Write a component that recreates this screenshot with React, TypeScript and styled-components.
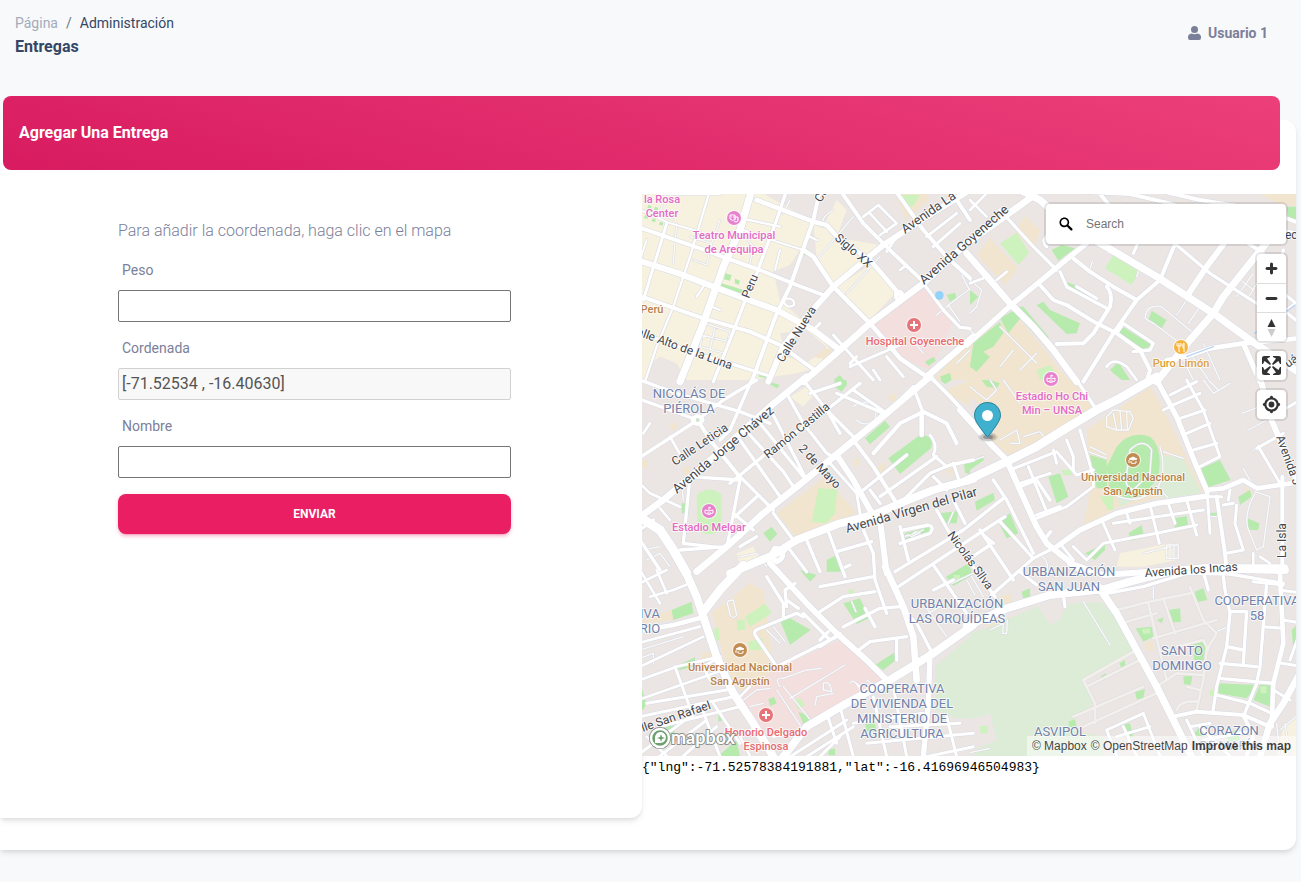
import React, { useState } from "react";
import styled, { createGlobalStyle } from "styled-components";

const GlobalStyle = createGlobalStyle`
  *, *::before, *::after { box-sizing: border-box; }
  body {
    margin: 0;
    background: #f8f9fa;
    color: #344767;
    font-family: Roboto, "Liberation Sans", sans-serif;
    font-size: 14px;
    line-height: 20px;
    overflow-x: hidden;
  }
`;

/* ---------- page chrome ---------- */

const TopBar = styled.header`
  display: flex;
  justify-content: space-between;
  align-items: flex-start;
  height: 96px;
  padding: 13px 33px 0 15px;
`;

const Breadcrumb = styled.ol`
  display: flex;
  gap: 8px;
  margin: 0;
  padding: 0;
  list-style: none;
`;

const CrumbLink = styled.a`
  color: #a3abbb;
  text-decoration: none;
`;

const Slash = styled.li`
  color: #6c757d;
`;

const PageTitle = styled.h1`
  margin: 0;
  font-size: 16px;
  line-height: 28px;
  font-weight: 700;
`;

const UserLink = styled.a`
  display: flex;
  align-items: center;
  gap: 7px;
  margin-top: 10px;
  color: #7b809a;
  font-weight: 700;
  text-decoration: none;
`;

const Panel = styled.main`
  margin: 24px 5px 32px 0;
  padding-bottom: 32px;
  background: #fff;
  border-radius: 0 12px 12px 0;
  box-shadow: 0 4px 6px -1px rgba(0, 0, 0, 0.1), 0 2px 4px -1px rgba(0, 0, 0, 0.06);
`;

const Banner = styled.div`
  position: relative;
  top: -24px;
  display: flex;
  align-items: center;
  height: 74px;
  margin: 0 16px 0 3px;
  padding: 0 16px;
  border-radius: 8px;
  background: linear-gradient(195deg, #ec407a, #d81b60);
`;

const BannerTitle = styled.h2`
  margin: 0;
  color: #fff;
  font-size: 16px;
  line-height: 26px;
  font-weight: 700;
`;

const Columns = styled.div`
  display: grid;
  grid-template-columns: minmax(0, 642fr) minmax(0, 654fr);
  align-items: start;
`;

/* ---------- form ---------- */

const FormCard = styled.section`
  min-height: 624px;
  padding: 24px 131px 24px 118px;
  border-radius: 0 0 12px 0;
  background: #fff;
  box-shadow: 0 4px 6px -1px rgba(0, 0, 0, 0.1), 0 2px 4px -1px rgba(0, 0, 0, 0.06);
`;

const Hint = styled.p`
  margin: 0 0 16px;
  color: #7b809a;
  font-size: 16px;
  line-height: 26px;
  font-weight: 300;
`;

const Field = styled.div`
  display: flex;
  flex-direction: column;
  gap: 10px;
  margin-bottom: 16px;
`;

const Label = styled.label`
  padding-left: 4px;
  color: #7b809a;
`;

const TextInput = styled.input`
  width: 100%;
  height: 32px;
  padding: 0 3px 2px;
  border: 1px solid #767676;
  border-radius: 2px;
  background: #fff;
  color: #212529;
  font-family: inherit;
  font-size: 16px;
  &:disabled {
    border-color: #d1d1d1;
    background: #f8f8f8;
    color: #545454;
  }
`;

const SubmitButton = styled.button`
  width: 100%;
  height: 40px;
  border: 0;
  border-radius: 8px;
  background: #e91e63;
  color: #fff;
  font-family: inherit;
  font-size: 12px;
  font-weight: 700;
  text-transform: uppercase;
  box-shadow: 0 3px 3px 0 rgba(233, 30, 99, 0.15), 0 3px 1px -2px rgba(233, 30, 99, 0.2),
    0 1px 5px 0 rgba(233, 30, 99, 0.15);
`;

/* ---------- map ---------- */

const MapFrame = styled.div`
  position: relative;
  height: 562px;
  overflow: hidden;
  background: #ebe6e4;
`;

const MapSvg = styled.svg`
  display: block;
  width: 100%;
  height: 100%;
  text {
    font-family: Roboto, "Liberation Sans", sans-serif;
    paint-order: stroke;
    stroke: rgba(255, 255, 255, 0.7);
    stroke-width: 2px;
    stroke-linejoin: round;
  }
`;

const Controls = styled.div`
  position: absolute;
  top: 10px;
  right: 10px;
  display: flex;
  flex-direction: column;
  align-items: flex-end;
  gap: 10px;
`;

const SearchBox = styled.label`
  display: flex;
  align-items: center;
  gap: 11px;
  width: 240px;
  height: 40px;
  padding: 0 11px;
  border-radius: 4px;
  background: #fff;
  box-shadow: 0 0 0 2px rgba(0, 0, 0, 0.1);
`;

const SearchInput = styled.input`
  flex: 1;
  min-width: 0;
  padding: 0;
  border: 0;
  outline: 0;
  background: transparent;
  color: #404040;
  font-family: "Liberation Sans", Arial, sans-serif;
  font-size: 12px;
  &::placeholder { color: #757575; opacity: 1; }
`;

const ControlGroup = styled.div`
  width: 29px;
  border-radius: 4px;
  background: #fff;
  box-shadow: 0 0 0 2px rgba(0, 0, 0, 0.1);
`;

const ControlButton = styled.button`
  display: block;
  width: 29px;
  height: 29px;
  padding: 0;
  border: 0;
  background: transparent;
  overflow: hidden;
  & + & {
    border-top: 1px solid #ddd;
  }
  svg { display: block; }
`;

const Attribution = styled.div`
  position: absolute;
  right: 0;
  bottom: 0;
  display: flex;
  gap: 4px;
  padding: 0 5px;
  background: rgba(255, 255, 255, 0.5);
  font-family: "Liberation Sans", Arial, sans-serif;
  font-size: 12px;
  line-height: 20px;
`;

const AttributionLink = styled.a<{ $strong?: boolean }>`
  color: rgba(0, 0, 0, 0.75);
  font-weight: ${(p) => (p.$strong ? 700 : 400)};
  text-decoration: none;
`;

const Readout = styled.pre`
  margin: 0;
  color: #000;
  font-family: "Liberation Mono", monospace;
  font-size: 13px;
  line-height: 24px;
`;

/* Geometry is stored per map tile, at three units to the pixel. */

type Street = [number, string];
interface Tile {
  x: number;
  y: number;
  cream?: string;
  land?: string;
  sand?: string;
  pink?: string;
  park?: string;
  lime?: string;
  green: string;
  lanes?: string;
  streets: Street[];
}

const tiles: Tile[] = [
  {
    x: 0,
    y: 0,
    cream:
      "M0 0H350L520 95L480 180L450 225L400 245L420 330L520 420L580 490L540 530L470 550L330 570H0Z M520 100L600 145L720 165L640 240L580 285L530 200Z M590 290L690 225L770 305L690 390L640 350Z M545 120L590 30L620 60L590 140Z",
    land: "M30 520L60 500L110 520L140 570H20Z M400 245L470 220L560 265L540 310L440 280Z M420 430L500 420L560 470L500 520L440 500Z",
    sand: "M510 460L580 480L560 510L520 500Z M765 12H865V30L800 90Z M880 570L940 500L990 460V570Z",
    pink: "M845 285L870 295L940 395L870 540L790 505L700 400Z",
    lime: "M780 15H840L820 48L800 52Z",
    green:
      "M245 280L310 300L300 315L240 295Z M255 250L275 255L270 272L252 268Z M285 266L300 272L296 284L284 280Z M490 168L525 195L480 196Z M920 315L945 308L950 325L930 335Z M855 515L880 500L888 512L865 528Z M580 570L600 555L610 570Z M360 545L385 555L380 565L355 560Z M900 560L930 548L935 570H905Z M25 45l10 4l-3 8l-10-3Z M45 50l10 4l-3 8l-10-3Z M65 60l10 4l-3 8l-10-3Z M15 75l10 4l-3 8l-10-3Z M38 85l10 4l-3 8l-10-3Z M60 95l10 4l-3 8l-10-3Z",
    lanes:
      "M300 120L340 170L330 220 M160 210L200 225L215 160 M240 90L215 160L150 140 M110 100L100 220 M580 60Q540 80 550 110 M640 80L530 210 M720 200L620 310 M195 400L270 425L255 490L180 470Z M225 410L210 480 M185 435L265 455 M75 12L60 70L100 90 M450 30L430 70 M890 375Q930 340 985 300 M960 240Q975 280 990 300 M925 345L960 395 M810 440L850 490 M950 520L990 480",
    streets: [
      [22, "M335 0L300 120L250 230L190 400L120 575"],
      [18, "M0 213L110 248L220 290L340 335L410 360L520 420L600 480"],
      [14, "M350 30L520 95L560 105L600 150L690 210L780 315"],
      [12, "M0 113L180 175L260 205L360 240L470 285L550 315"],
      [12, "M0 318L90 350L190 385L330 425L420 465L530 545"],
      [10, "M0 425L60 450L170 490L270 520L380 555"],
      [10, "M440 0L410 90L350 250L320 320L270 450L220 575"],
      [12, "M540 0L520 90L450 290L410 370L370 480L335 575"],
      [7, "M210 0L180 100L150 200L100 350L50 470L15 575"],
      [9, "M80 100L50 200L10 330"],
      [6, "M0 60L90 100L180 125 M310 120L410 155L490 180 M20 150L0 210 M420 180L405 240"],
      [7, "M240 12L60 12 M280 80L420 110 M190 290L170 320 M215 350L240 360 M500 135L530 150"],
      [18, "M990 0L860 80L730 165L580 290L500 380L430 470L385 575"],
      [20, "M990 150L850 280L690 400L600 480L490 575"],
      [14, "M490 180L520 200L580 290L690 400L780 505L860 560"],
      [12, "M600 0L670 100L760 190L850 275"],
      [12, "M765 0L850 120L920 200L990 265"],
      [12, "M930 0L990 90"],
      [10, "M850 280L910 360L960 412L990 415"],
      [20, "M1000 440L860 560"],
      [8, "M670 80L715 45L770 100L720 135 M690 70L740 125 M740 185L770 140 M780 240L800 225"],
      [9, "M580 435L620 480L700 570 M630 530L790 460 M740 500L790 560 M700 540L720 570 M650 500L630 520"],
      [9, "M860 140L950 70 M880 170L960 100 M520 420L540 400"],
      [7, "M438 345Q425 335 440 325Q465 325 462 345Q445 355 438 345"],
      [12, "M768 310Q765 330 780 328Q795 315 780 305Z"],
    ],
  },
  {
    x: 990,
    y: 0,
    sand: "M60 145L145 235L105 285L20 195Z M165 78L210 120L190 180L135 125Z M0 440L90 400L150 390L240 500L300 575H0Z M870 12H985V50L920 40Z",
    lime: "M140 128L178 188L145 225L90 160Z M430 195L508 245L485 285L405 235Z M200 540L240 525L270 570H210Z",
    green:
      "M245 180L275 165L315 175L265 212Z M290 275L350 300L375 325L300 300Z M200 345L220 335L240 360L330 400L320 430L290 432Z M450 405L545 465L525 480L445 430Z M545 362L590 390L575 415L535 390Z M135 350L160 350L235 440L240 485L165 400Z M90 385L135 360L155 380L115 430Z M10 460L90 395L100 430L70 470L40 485L60 500L20 545L0 530Z M0 300L25 320L0 345Z M420 540L445 515L480 570H455L430 550Z M950 50H985V95L955 80Z",
    lanes:
      "M355 250L368 212 M415 190Q405 175 425 165 M0 270L35 300L20 350L0 370 M550 400L525 385Q530 340 575 350L670 430 M550 400L630 460 M90 410L200 520 M130 480L90 530 M150 540L200 490 M620 375L650 330 M655 400L690 350 M700 460L750 570 M660 490L720 575 M640 510L670 570 M0 420L20 440 M500 260L510 230 M850 250L800 320 M870 265L830 330 M870 300L920 350 M800 260L850 300",
    streets: [
      [20, "M-10 160L60 110L110 75L180 25L200 0"],
      [22, "M150 0L210 30L300 110L400 165L560 260L730 370L840 450L990 550"],
      [20, "M-10 190L60 270L120 340L190 410L250 480L320 575"],
      [16, "M-10 465L130 340L300 200L400 120L470 50"],
      [22, "M920 120L840 220L760 320L730 370L660 450L560 575"],
      [18, "M770 150L710 230L650 320"],
      [12, "M620 150L570 270L500 330L430 430L340 575"],
      [10, "M90 60L190 170L260 240 M230 170Q210 150 240 130"],
      [12, "M210 285L250 330L290 345L380 400L440 430L510 480L540 540L530 575"],
      [10, "M270 245L290 290L410 355 M320 290L380 325"],
      [12, "M310 205L360 245L430 290L500 330"],
      [12, "M410 290Q430 310 420 350L370 430L340 460L260 462"],
      [10, "M490 190L530 100 M620 165L720 250L860 340"],
      [10, "M440 430L460 400L550 460L540 480L490 485"],
      [14, "M990 445L820 460L720 475L650 500L590 510"],
      [16, "M820 460L870 575"],
      [12, "M230 0L480 12L600 40L730 90L880 190 M380 0L430 60 M560 0L690 30L880 60L990 100"],
      [8, "M0 30L50 80 M80 270L110 245 M0 280L40 265 M60 0L0 60 M410 530Q430 500 470 530L500 570"],
      [10, "M940 180L900 330L990 400 M880 260L990 350 M990 130L870 110 M870 420L990 330"],
    ],
  },
  {
    x: 0,
    y: 570,
    cream: "M450 50L500 20L525 40L490 80Z M290 520L340 500L360 540L300 550Z",
    sand: "M555 290L650 400L470 475L410 400Z M90 130H110V150H92Z M130 260H148V285H130Z M6 240H22V262H6Z M750 40L770 45L765 65L745 60Z M640 240L660 235L655 260L645 262Z M710 262L740 245L735 280L715 290Z M920 30L990 0V80L940 50Z M915 270L940 265L935 290Z",
    lime: "M170 345Q208 312 245 345V450Q208 475 172 450Z M535 325L592 328L585 400L560 430L515 425Z",
    green:
      "M675 175L735 122L750 140L690 193Z M745 235L840 165Q885 165 873 205L780 282Z M585 0H618L622 12L605 35L580 18Z M370 460L395 440L412 462L390 485Z M560 540L590 525L605 575H560Z M900 400L955 393L950 430L920 430Z M795 460L870 440L865 458L790 482Z M972 250H990V282L975 278Z M125 370H145V400H125Z M5 440L20 435L10 455Z M370 0L420 15L410 25Z M900 0L935 0L915 12Z M430 500L460 480L455 495Z",
    lanes:
      "M640 80Q660 60 690 70Q720 90 700 125Q670 140 650 120 M800 470L850 450 M820 460Q830 450 840 462 M940 395L925 430 M150 290Q120 310 130 360 M20 540L60 520L90 560 M10 510L60 500 M300 530L350 520L380 560",
    streets: [
      [20, "M-10 418L70 360L240 215L390 80L500 -10"],
      [20, "M870 -10L740 100L600 215L490 305L370 400L260 500L170 575"],
      [24, "M270 580L400 525L470 480L600 430L700 405L780 370L880 330L1000 297"],
      [28, "M0 412L60 450L100 510L140 580"],
      [10, "M0 232L173 120L250 60L350 0 M0 58L173 120 M0 0L110 40L300 95L390 130"],
      [12, "M173 120L210 180L300 292"],
      [10, "M335 0L270 150L240 180"],
      [8, "M90 170L130 240 M0 310L30 340L120 380 M60 385L90 420 M30 130L10 160"],
      [10, "M325 160L430 275L460 320 M400 105L500 300 M300 180L420 350 M360 130L490 290"],
      [10, "M270 310L380 220L560 90L660 10"],
      [10, "M440 40L490 130L560 220L600 240"],
      [10, "M490 0L560 90L600 160 M560 90L650 180"],
      [18, "M590 225L640 300L690 390L720 420L740 580"],
      [9, "M570 250L650 340L660 400"],
      [12, "M640 180L700 260L770 370"],
      [10, "M670 330L800 225 M720 350L890 230 M690 330L720 370"],
      [12, "M700 220L780 130L850 95L920 130L950 190"],
      [14, "M845 100V165"],
      [9, "M870 165Q895 195 880 225L920 260"],
      [10, "M150 290L300 300L260 505L130 490Z"],
      [10, "M300 290L400 390 M280 400L340 450 M285 410L350 350 M400 400L460 480L430 520 M300 500L350 470"],
      [10, "M640 30L740 100 M590 40L730 100 M600 10L510 40 M820 20L850 100 M780 60L820 20"],
      [12, "M870 -10L930 50L1000 125"],
      [10, "M780 370L870 280L930 255L1000 240 M940 250L960 310 M880 290L920 330"],
      [10, "M500 480L540 575 M450 510L500 575"],
      [10, "M0 480L60 570 M40 420L0 450 M120 510L260 500"],
      [16, "M405 505Q385 530 410 545Q440 530 420 508Z M160 120Q173 100 186 120Q173 140 160 120Z"],
    ],
  },
  {
    x: 990,
    y: 570,
    cream: "M450 520L600 490L620 540L520 560L440 560Z",
    land: "M-20 90L30 110L60 150L20 140Z",
    sand: "M60 0H310L375 90L220 190L120 230L60 180L90 120L0 50V0Z M350 150L540 20L580 90L700 335L560 355L440 385L340 440L360 330Z M820 320L850 335L840 360Z",
    park: "M570 225L640 235L695 340L590 355L540 340L450 380L440 350L560 300Z",
    lime: "M390 350L430 345L430 390L415 390Z M275 270L305 268V285L280 286Z",
    green:
      "M440 200Q480 150 540 170Q580 200 565 290L520 350Q470 370 420 340L410 260Z M360 225L410 240L412 325L380 325Z M695 265L750 240L782 300L705 325Z M235 290L270 280L295 350L260 370Z M85 425L120 400L145 460L110 475Z M15 365L70 338L75 360L20 392Z M475 460L515 435L522 470L485 482Z M612 415L650 408L655 440L615 445Z M345 520L405 490L405 510L375 540Z M720 398H748V412H720Z M805 350L840 330L845 350L810 375Z M832 415L868 430L865 450L835 450Z M0 250L35 225L42 240L0 270Z M35 0H60L90 10L80 25L50 20Z",
    lanes:
      "M480 210Q520 170 545 210L540 280L490 330Q460 320 470 280Z M410 110L430 90L480 95L490 115L475 150L440 150L410 140Z M430 100L440 150 M450 95L455 150 M470 95L472 150 M360 200L410 225 M355 215L410 235 M580 215L640 235 M570 200Q590 270 565 320L595 355 M410 330Q480 380 540 340 M90 180L140 150L150 190L120 190 M160 170L210 155L230 180L200 190 M0 20L50 60L80 30L60 0 M100 0L150 70 M590 495H625V535H590Z M600 495V535 M612 495V535 M520 520L600 500 M700 0L730 40L780 10 M715 0L745 30 M0 245L40 230 M720 410H750 M855 340Q825 390 832 440L860 510L880 500L900 350L855 335 M820 265L850 320 M815 100L870 80 M835 150L890 120 M850 210L900 180",
    streets: [
      [26, "M-10 302L110 245L200 200L280 150L380 90L440 60L560 -10"],
      [18, "M-30 90L60 190L110 240L150 330L200 440L230 490L330 570"],
      [16, "M560 0L620 110L680 260L712 335"],
      [18, "M870 -10L900 110L930 180L1000 350"],
      [10, "M320 0L380 90"],
      [14, "M710 330L760 325L820 300L860 325L1000 305"],
      [16, "M712 348L560 370L440 400L330 450L260 500"],
      [9, "M310 500L350 540L400 490L560 460L680 435 M270 490L310 540 M430 430L560 410L700 390"],
      [9, "M400 430L435 510 M470 400L480 430 M540 375L568 490 M595 370L615 430 M650 360L680 465 M712 345L720 460"],
      [12, "M740 350L765 520L770 575"],
      [9, "M710 350L755 350 M790 370L760 375 M800 375L795 430L820 510L770 520 M780 330L775 360"],
      [12, "M937 290V575"],
      [9, "M865 200L930 310 M860 205L940 160 M990 60L940 90"],
      [9, "M650 0L700 90L750 230L690 260 M600 45L680 5 M610 75L690 40 M630 115L705 90 M650 160L720 130 M670 210L740 190 M580 90L610 75"],
      [9, "M120 270L260 215L320 285L370 270 M150 310L240 280 M200 415L290 380L370 320V290 M175 260L230 395 M330 150L370 290 M290 180L310 230V270 M250 210L260 250"],
      [18, "M300 550L400 585L540 575L700 562L945 562"],
      [8, "M850 520V560 M870 530L900 550"],
    ],
  },
  {
    x: 0,
    y: 1140,
    sand: "M215 130L330 40L370 60L400 280L390 350L310 370L270 330Z M6 150L95 120L100 150L10 160Z M180 250L215 245V280L190 275Z",
    pink: "M600 210L735 340L520 470L480 480L390 500L330 450L300 380L400 300Z",
    park: "M1000 190L885 290L885 420L950 445H1000Z",
    lime: "M315 140L375 100L395 130L330 170Z M290 150H315V180H292Z M220 180L235 170L240 210L225 212Z M325 215L370 205L365 240H328Z M460 390L480 385L495 405L475 420Z M625 60L640 58V75L628 78Z",
    green:
      "M420 150L450 145L512 180L450 225Z M610 100L660 85L687 145L650 162Z M705 285L762 248L768 270L730 300Z M95 120L155 95L160 130L100 150Z M105 290L165 262L167 288L120 300Z M0 340L20 400L10 420L0 415Z M235 420L250 450L235 455Z M480 0L530 15L510 35Z M235 558L290 510L300 558Z M475 425L510 440L518 465L495 475Z M385 388L402 380L410 400L390 408Z M675 460H705L710 485H680Z M565 540L585 535V556H565Z M30 480L100 465L110 520L60 510Z",
    lanes:
      "M265 110Q255 90 280 90L290 135Q280 150 270 135Z M310 390L350 360L390 355 M330 410L370 400 M420 350Q400 320 430 325L500 300L545 295 M430 350L520 460L500 470 M410 360L490 480 M550 340Q570 330 575 365L550 360Z M450 385L615 285 M525 405L530 380L580 370 M630 340Q640 320 660 360L680 370 M380 180L420 220 M400 170L435 215 M0 240L130 200 M0 265L40 250V280 M680 330L720 360 M650 340L690 380",
    streets: [
      [24, "M130 -10L170 80L200 170L230 260L280 370L340 460L400 560"],
      [26, "M310 -15L240 60L190 125"],
      [14, "M195 140L100 165L0 182"],
      [18, "M390 -20L500 100L590 190L690 280L740 330"],
      [20, "M735 -10L790 110L820 200L830 330"],
      [24, "M1000 165L880 250L750 330L620 400L500 470L430 560"],
      [16, "M870 250L865 400L850 560"],
      [8, "M0 218L180 170 M0 290L190 200 M0 330L110 290L240 260 M0 388L250 300 M0 0L60 100 M30 80L100 60L150 40 M0 40L80 0 M80 70L50 0"],
      [9, "M105 290L160 440 M20 400L260 360 M0 440L280 380 M60 470L300 410 M180 400L240 560 M220 400L300 520 M240 260L190 290L210 330 M0 550L150 440 M60 558L200 450 M130 558L230 470"],
      [10, "M410 290L345 195Q340 180 360 175L470 130L490 140 M410 290L600 195 M490 130L570 210 M440 110L435 60L465 40 M430 140V100L380 20 M475 115L440 90"],
      [9, "M600 410L640 560 M700 380L740 560 M640 460L850 430 M680 520L1000 490 M760 350L800 560 M450 560L560 490L620 450 M500 560L640 470 M540 560L600 500 M560 430L590 520 M920 440L950 560 M860 560L1000 530 M750 470L960 460"],
      [8, "M300 380L330 350 M20 500L80 558 M350 470L300 500L330 558 M400 500L500 480"],
    ],
  },
  {
    x: 990,
    y: 1140,
    cream: "M940 470L1000 430V558H920Z",
    park: "M0 190L60 170L200 110L390 95L440 140L480 180L500 240L340 330L370 400L310 450L300 480L400 500V558H0Z",
    land: "M0 450L60 430L80 510L0 545Z M205 110L290 100L270 150L240 165Z M0 500L30 520L10 558H0Z",
    sand: "M50 165L160 130L175 180L70 220Z M90 80L120 70L130 110L100 115Z M525 215H550V240L530 242Z",
    lime: "M30 468H52V490H32Z M718 360H735V378H720Z M515 178L540 175L542 190L520 192Z M870 350L890 348V370H872Z",
    green:
      "M675 65L700 55L712 90L680 97Z M595 120L630 115L633 155L598 158Z M497 175L545 170L550 200L520 215Z M745 340L860 345L830 385L745 370Z M870 345L905 345L900 410L850 390Z M155 65L180 55V80L160 85Z M448 280L465 270V290L455 295Z M392 318L408 310V328L398 330Z M495 365L525 358L520 385L500 388Z M295 455L315 448L320 470L300 472Z M455 465L480 460L490 500L465 505Z M640 320L668 315L662 345L642 342Z M670 215H705V270H672Z M685 475L720 480L700 500L670 495Z M560 150L582 142L575 160Z M965 180L985 160V220L970 240Z M760 490L800 480L810 510L780 515Z M840 0L880 2L760 8Z",
    lanes:
      "M340 95L420 225 M60 180L100 160L98 190H110L112 150 M0 548L60 535 M740 185L775 170 M550 50V85 M920 460L930 558 M945 460L960 558 M990 430L930 480",
    streets: [
      [24, "M-10 168L110 115L240 75L400 58L480 35L600 5L720 -5L945 0"],
      [10, "M280 75L285 110 M410 70L520 50L650 10L780 12L940 40"],
      [22, "M385 50L440 130L500 240L560 350L600 430L665 560"],
      [10, "M700 5L715 60 M760 20L765 60L780 130L770 230L740 350L728 430"],
      [14, "M930 10L940 220L910 340L905 470"],
      [10, "M780 125H830L820 280 M890 40L870 290L860 340L820 440 M770 230L820 240 M750 280L860 290 M750 325L910 340 M740 375L840 400L905 430"],
      [12, "M610 440L680 425L820 435L900 470 M820 435L850 500L830 558"],
      [9, "M880 170L940 175 M930 60L1000 70 M935 280L1000 290 M940 150L1000 160 M910 360L960 390 M850 35L940 45"],
      [20, "M1000 290L940 400L900 460L870 560"],
      [9, "M1000 160L960 270 M410 480L520 430L570 558 M440 558L410 480 M460 470L500 558 M440 500L540 470 M650 450L700 558 M690 470L780 558 M660 470L720 460 M700 510L860 480"],
    ],
  },
  {
    x: 540,
    y: 870,
    lime: "M400 285H420V300H402Z M85 335L100 330L102 350L90 352Z",
    green: "M378 290L445 250L458 285L400 318Z",
    lanes: "M455 290L490 350 M440 300L465 345 M310 370L380 470 M325 400L360 380 M95 365L108 395 M395 310L480 270 M665 230Q690 240 680 290 M255 170Q265 160 275 170L300 158",
    streets: [
      [10, "M25 155L75 290 M50 215L155 185 M130 150L160 220L165 300L200 400"],
      [10, "M0 320L160 290 M0 395L70 350L165 335 M70 440L180 385L240 380 M135 385L165 440"],
      [10, "M110 515L150 485L260 470 M230 480V540 M75 262L90 255"],
      [10, "M240 140L265 240 M240 190L330 160Q345 140 325 135L250 150"],
      [10, "M225 275L430 150L550 55 M235 320L470 165L555 110"],
      [10, "M350 90L400 180L525 350 M400 60L435 130"],
      [10, "M340 255L440 400 M340 330L400 300"],
      [10, "M480 150L580 300 M540 125L640 235 M450 235L510 195 M490 165L520 190"],
      [10, "M520 0L560 60L640 220"],
      [10, "M515 345L640 235L720 195 M600 275L650 315"],
      [10, "M650 105L720 80 M600 20L650 0L690 60 M680 170L692 155"],
      [10, "M240 380L290 430L340 525"],
      [10, "M0 480L25 455 M0 500L60 460"],
    ],
  },
];

const alleys =
  "M440 120L540 95L660 70 M470 155L560 130 M535 100L590 330 M580 85L615 190 M660 50L700 150L740 190 M550 205L740 150 M560 350L620 310L700 315 M740 190L710 240L700 330L680 420 M340 330L500 240 M350 350L510 270 M340 330L375 400V460 M310 440L520 350 M340 470L560 370 M620 420Q630 390 680 395 M650 350L690 360 M620 230L700 210L715 240";

const palette = {
  pink: "#e56ac5",
  red: "#ea6a70",
  brown: "#b98149",
  amber: "#dda23a",
  area: "#7182ab",
  street: "#45464b",
};
type Tone = keyof typeof palette;

const placeLabels: { x: number; y: number; tone: Tone; size?: number; lines: string[] }[] = [
  { x: 662, y: 203, tone: "pink", lines: ["la Rosa", "Center"] },
  { x: 734, y: 239, tone: "pink", lines: ["Teatro Municipal", "de Arequipa"] },
  { x: 652, y: 313, tone: "brown", lines: ["Perú"] },
  { x: 915, y: 345, tone: "red", lines: ["Hospital Goyeneche"] },
  { x: 1181, y: 367, tone: "amber", lines: ["Puro Limón"] },
  { x: 1052, y: 400, tone: "pink", lines: ["Estadio Ho Chi", "Min – UNSA"] },
  { x: 709, y: 531, tone: "pink", lines: ["Estadio Melgar"] },
  { x: 1133, y: 481, tone: "brown", lines: ["Universidad Nacional", "San Agustín"] },
  { x: 740, y: 671, tone: "brown", lines: ["Universidad Nacional", "San Agustín"] },
  { x: 766, y: 736, tone: "red", lines: ["Honorio Delgado", "Espinosa"] },
  { x: 689, y: 398, tone: "area", size: 13, lines: ["NICOLÁS DE", "PIÉROLA"] },
  { x: 1069, y: 576, tone: "area", size: 13, lines: ["URBANIZACIÓN", "SAN JUAN"] },
  { x: 957, y: 608, tone: "area", size: 13, lines: ["URBANIZACIÓN", "LAS ORQUÍDEAS"] },
  { x: 1257, y: 605, tone: "area", size: 13, lines: ["COOPERATIVA", "58"] },
  { x: 1182, y: 655, tone: "area", size: 13, lines: ["SANTO", "DOMINGO"] },
  { x: 1229, y: 735, tone: "area", size: 13, lines: ["CORAZON", "DE MARÍA"] },
  { x: 1060, y: 736, tone: "area", size: 13, lines: ["ASVIPOL"] },
  {
    x: 902,
    y: 693,
    tone: "area",
    size: 13,
    lines: ["COOPERATIVA", "DE VIVIENDA DEL", "MINISTERIO DE", "AGRICULTURA"],
  },
  { x: 650, y: 618, tone: "area", size: 13, lines: ["IVA", "RIO"] },
];

const streetLabels: [number, number, number, number, string][] = [
  [821, 203, -60, 12, "Cu"],
  [905, 234, -35, 13, "Avenida La"],
  [924, 285, -41, 13, "Avenida Goyeneche"],
  [834, 239, 41, 12, "Siglo XX"],
  [749, 299, -68, 12, "Peru"],
  [783, 363, -58, 12, "Calle Nueva"],
  [636, 335, 20, 12, "alle Alto de la Luna"],
  [675, 466, -34, 12, "Calle Leticia"],
  [677, 494, -40, 13, "Avenida Jorge Chávez"],
  [768, 459, -39, 12, "Ramón Castilla"],
  [798, 449, 47, 12, "2 de Mayo"],
  [847, 533, -16, 13, "Avenida Vírgen del Pilar"],
  [947, 535, 54, 12, "Nicolás Sllva"],
  [1145, 577, -4, 12, "Avenida los Incas"],
  [1286, 558, -90, 12, "La Isla"],
  [1276, 437, 70, 12, "Avenida J"],
  [643, 732, -19, 12, "lle San Rafael"],
  [1285, 239, 0, 12, "ec"],
  [1288, 368, -35, 12, "uá"],
];

const poiGlyphs = {
  cross: <path d="M0 -4V4M-4 0H4" stroke="#fff" strokeWidth="2" />,
  masks: (
    <>
      <path d="M-4 -3H1V1Q-1 4 -4 1Z M0 -1H4V3Q2 5 0 3" fill="none" stroke="#fff" />
      <path d="M-3 -1H-2M-1 -1H0M1 1H2M3 1H4" stroke="#fff" />
    </>
  ),
  stadium: (
    <>
      <path d="M-4 -1V2Q0 5 4 2V-1Q0 1 -4 -1ZM0 -1V-4L2 -3" fill="none" stroke="#fff" />
      <path d="M-1 1V3M1 1V3" stroke="#fff" />
    </>
  ),
  school: (
    <>
      <path d="M-4 -1L0 -3L4 -1L0 0Z" fill="#fff" stroke="#fff" />
      <path d="M-2 1V3Q0 4 3 3V1M-4 0V3" fill="none" stroke="#fff" />
    </>
  ),
  food: <path d="M-2 5V-4M-4 -4V-1H0V-4M3 5V-4Q1 -3 2 1H3" fill="none" stroke="#fff" />,
};

const pois: [number, number, string, keyof typeof poiGlyphs][] = [
  [734, 218, "#e882cf", "masks"],
  [914, 325, "#e57377", "cross"],
  [1181, 347, "#f7b43c", "food"],
  [1051, 379, "#e882cf", "stadium"],
  [709, 511, "#e882cf", "stadium"],
  [1133, 460, "#c38c52", "school"],
  [740, 650, "#c38c52", "school"],
  [766, 715, "#e57377", "cross"],
];

function Poi({ x, y, color, kind }: { x: number; y: number; color: string; kind: keyof typeof poiGlyphs }) {
  return (
    <g transform={`translate(${x} ${y})`}>
      <circle r="8" fill="#fff" opacity="0.7" />
      <circle r="7" fill={color} />
      {poiGlyphs[kind]}
    </g>
  );
}

function Ground() {
  return (
    <g transform="translate(640 190) scale(0.33333)">
      {tiles.map((t) => (
        <g key={`${t.x}-${t.y}`} transform={`translate(${t.x} ${t.y})`}>
          <path d={t.cream} fill="#f7f1df" />
          <path d={t.sand} fill="#f1e5d0" />
          <path d={t.pink} fill="#f4dfdf" />
          <path d={t.park} fill="#dcecd6" />
          <path d={t.land} fill="#ebe6e4" />
          <path d={t.green} fill="#b7eaad" />
          <path d={t.lime} fill="#cef2bd" />
        </g>
      ))}
      <g fill="none" strokeLinecap="round" strokeLinejoin="round">
        {tiles.map((t) => (
          <g key={`${t.x}-${t.y}`} transform={`translate(${t.x} ${t.y})`}>
            <path d={t.lanes} stroke="#d9dbe2" strokeWidth="7" />
            <path d={t.lanes} stroke="#fbfafa" strokeWidth="4" />
            {t.streets.map(([w, d]) => (
              <path key={d} d={d} stroke="#d6d9e4" strokeWidth={w + 3} />
            ))}
          </g>
        ))}
        <path d={alleys} transform="translate(990 1140)" stroke="#dcdbe0" strokeWidth="11" />
        <path d={alleys} transform="translate(990 1140)" stroke="#f3f0ec" strokeWidth="8" />
        {tiles.map((t) => (
          <g key={`${t.x}-${t.y}`} transform={`translate(${t.x} ${t.y})`} stroke="#fff">
            {t.streets.map(([w, d]) => (
              <path key={d} d={d} strokeWidth={w} />
            ))}
          </g>
        ))}
        <path d="M1843 430L1890 400L1965 345 M1640 500L1720 470" stroke="#bcd3ee" strokeWidth="4" />
      </g>
      <circle cx="898" cy="316" r="13" fill="#93d3fa" />
      <circle cx="173" cy="690" r="6" fill="#cfe5cf" />
    </g>
  );
}

function Marker() {
  return (
    <g transform="translate(974 402)">
      <ellipse cx="14" cy="35" rx="10" ry="5" fill="#000" opacity="0.08" />
      <ellipse cx="14" cy="35" rx="8" ry="4" fill="#000" opacity="0.15" />
      <ellipse cx="14" cy="35" rx="5" ry="2" fill="#000" opacity="0.25" />
      <path
        d="M27,13.5C27,19.07 20.25,27 14.75,34.5C14.02,35.5 12.98,35.5 12.25,34.5C6.75,27 0,19.22 0,13.5C0,6.04 6.04,0 13.5,0C20.96,0 27,6.04 27,13.5Z"
        fill="#3fb1ce"
      />
      <path
        d="M13.5,.5C20.7,.5 26.5,6.3 26.5,13.5C26.5,15.9 25,19.2 22.7,22.7C20.4,26.3 17.2,30.4 14.35,34.2C13.8,34.9 13.2,34.9 12.65,34.2C9.8,30.4 6.3,26.1 3.8,22.3C1.9,19 .5,16 .5,13.5C.5,6.3 6.3,.5 13.5,.5Z"
        fill="none"
        stroke="#000"
        opacity="0.25"
      />
      <circle cx="13.5" cy="13.5" r="5.5" fill="#fff" />
    </g>
  );
}

const LogoText = styled.text`
  && {
    font-family: Lato, sans-serif;
    font-size: 18px;
    font-weight: 700;
    stroke: #8d918e;
    stroke-width: 2px;
  }
`;

function CityMap() {
  return (
    <MapSvg viewBox="642 194 654 562" preserveAspectRatio="xMidYMid slice" role="img" aria-label="Mapa">
      <Ground />
      {streetLabels.map(([x, y, angle, size, name]) => (
        <text
          key={name}
          transform={`translate(${x} ${y}) rotate(${angle})`}
          fontSize={size}
          fill={palette.street}
        >
          {name}
        </text>
      ))}
      {placeLabels.map(({ x, y, tone, size = 11, lines }) => (
        <text
          key={`${x}-${y}`}
          fontSize={size}
          fontWeight={tone === "area" ? 400 : 500}
          fill={palette[tone]}
          textAnchor="middle"
        >
          {lines.map((line, i) => (
            <tspan key={line} x={x} y={y + i * (tone === "area" ? 15 : 14)}>
              {line}
            </tspan>
          ))}
        </text>
      ))}
      {pois.map(([x, y, color, kind]) => (
        <Poi key={`${x}-${y}`} x={x} y={y} color={color} kind={kind} />
      ))}
      <Marker />
      <g>
        <circle cx="660" cy="738" r="9" fill="#6f9f70" stroke="#8d918e" strokeWidth="4" />
        <circle cx="660" cy="738" r="9" fill="#6f9f70" stroke="#fff" strokeWidth="2.5" />
        <path d="M655 743V738a5.5 5.5 0 1 1 5.5 5Z" fill="#fff" />
        <path d="M661 734L662 737L665 738L662 739L661 742L660 739L657 738L660 737Z" fill="#6f9f70" />
        <LogoText x="671" y="744" fill="#fff">
          mapbox
        </LogoText>
      </g>
    </MapSvg>
  );
}

function ControlIcon({ children, box = 29 }: { children: React.ReactNode; box?: number }) {
  return (
    <svg width="29" height="29" viewBox={`0 0 ${box} ${box}`} fill="#333" fillRule="evenodd" aria-hidden="true">
      {children}
    </svg>
  );
}

function MapControls() {
  return (
    <Controls>
      <SearchBox>
        <svg width="18" height="18" viewBox="0 0 18 18" aria-hidden="true">
          <path d="M7.4 2.5c-2.7 0-4.9 2.2-4.9 4.9s2.2 4.9 4.9 4.9c1 0 1.8-.2 2.5-.8l3.7 3.7c.2.2.4.3.8.3.7 0 1.1-.4 1.1-1.1 0-.3-.1-.5-.3-.8L11.4 10c.4-.8.8-1.6.8-2.5.1-2.8-2.1-5-4.8-5zm0 1.6c1.8 0 3.2 1.4 3.2 3.2s-1.4 3.2-3.2 3.2-3.3-1.3-3.3-3.1 1.4-3.3 3.3-3.3z" />
        </svg>
        <SearchInput type="text" placeholder="Search" aria-label="Search" />
      </SearchBox>
      <ControlGroup>
        <ControlButton type="button" aria-label="Zoom in">
          <ControlIcon>
            <path d="M14.5 8.5c-.75 0-1.5.75-1.5 1.5v3h-3c-.75 0-1.5.75-1.5 1.5S9.25 16 10 16h3v3c0 .75.75 1.5 1.5 1.5S16 19.75 16 19v-3h3c.75 0 1.5-.75 1.5-1.5S19.75 13 19 13h-3v-3c0-.75-.75-1.5-1.5-1.5z" />
          </ControlIcon>
        </ControlButton>
        <ControlButton type="button" aria-label="Zoom out">
          <ControlIcon>
            <path d="M10 13c-.75 0-1.5.75-1.5 1.5S9.25 16 10 16h9c.75 0 1.5-.75 1.5-1.5S19.75 13 19 13h-9z" />
          </ControlIcon>
        </ControlButton>
        <ControlButton type="button" aria-label="Reset bearing to north">
          <ControlIcon>
            <path d="M10.5 14l4-8 4 8h-8z" />
            <path d="M10.5 16l4 8 4-8h-8z" fill="#ccc" />
          </ControlIcon>
        </ControlButton>
      </ControlGroup>
      <ControlGroup>
        <ControlButton type="button" aria-label="Enter fullscreen">
          <ControlIcon>
            <path d="M24 16v5.5c0 1.75-.75 2.5-2.5 2.5H16v-1l3-1.5-4-5.5 1-1 5.5 4 1.5-3h1zM6 16l1.5 3 5.5-4 1 1-4 5.5 3 1.5v1H7.5C5.75 24 5 23.25 5 21.5V16h1zm7-11v1l-3 1.5 4 5.5-1 1-5.5-4L6 13H5V7.5C5 5.75 5.75 5 7.5 5H13zm11 2.5c0-1.75-.75-2.5-2.5-2.5H16v1l3 1.5-4 5.5 1 1 5.5-4 1.5 3h1V7.5z" />
          </ControlIcon>
        </ControlButton>
      </ControlGroup>
      <ControlGroup>
        <ControlButton type="button" aria-label="Find my location">
          <ControlIcon box={20}>
            <path d="M10 4C9 4 9 5 9 5v.1A5 5 0 0 0 5.1 9H5s-1 0-1 1 1 1 1 1h.1A5 5 0 0 0 9 14.9v.1s0 1 1 1 1-1 1-1v-.1a5 5 0 0 0 3.9-3.9h.1s1 0 1-1-1-1-1-1h-.1A5 5 0 0 0 11 5.1V5s0-1-1-1zm0 2.5a3.5 3.5 0 1 1 0 7 3.5 3.5 0 1 1 0-7z" />
            <circle cx="10" cy="10" r="2" />
          </ControlIcon>
        </ControlButton>
      </ControlGroup>
    </Controls>
  );
}

export default function App() {
  const [weight, setWeight] = useState("");
  const [name, setName] = useState("");

  return (
    <>
      <GlobalStyle />
      <TopBar>
        <nav aria-label="breadcrumb">
          <Breadcrumb>
            <li>
              <CrumbLink href="#">Página</CrumbLink>
            </li>
            <Slash aria-hidden="true">/</Slash>
            <li>Administración</li>
          </Breadcrumb>
          <PageTitle>Entregas</PageTitle>
        </nav>
        <UserLink href="#">
          <svg width="13" height="14" viewBox="0 0 13 14" fill="currentColor" aria-hidden="true">
            <circle cx="6.5" cy="3.5" r="3.5" />
            <path d="M0 12V11Q0 8 3.5 7.5Q6.5 9 9.5 7.5Q13 8 13 11V12Q13 14 11 14H2Q0 14 0 12Z" />
          </svg>
          Usuario 1
        </UserLink>
      </TopBar>
      <Panel>
        <Banner>
          <BannerTitle>Agregar Una Entrega</BannerTitle>
        </Banner>
        <Columns>
          <FormCard>
            <form onSubmit={(e) => e.preventDefault()}>
              <Hint>Para añadir la coordenada, haga clic en el mapa</Hint>
              <Field>
                <Label htmlFor="peso">Peso</Label>
                <TextInput id="peso" value={weight} onChange={(e) => setWeight(e.target.value)} />
              </Field>
              <Field>
                <Label htmlFor="cordenada">Cordenada</Label>
                <TextInput id="cordenada" value="[-71.52534 , -16.40630]" disabled readOnly />
              </Field>
              <Field>
                <Label htmlFor="nombre">Nombre</Label>
                <TextInput id="nombre" value={name} onChange={(e) => setName(e.target.value)} />
              </Field>
              <SubmitButton type="submit">Enviar</SubmitButton>
            </form>
          </FormCard>
          <section aria-label="Mapa de entregas">
            <MapFrame>
              <CityMap />
              <MapControls />
              <Attribution>
                <AttributionLink href="#">© Mapbox</AttributionLink>
                <AttributionLink href="#">© OpenStreetMap</AttributionLink>
                <AttributionLink href="#" $strong>
                  Improve this map
                </AttributionLink>
              </Attribution>
            </MapFrame>
            <Readout>{'{"lng":-71.52578384191881,"lat":-16.41696946504983}'}</Readout>
          </section>
        </Columns>
      </Panel>
    </>
  );
}
